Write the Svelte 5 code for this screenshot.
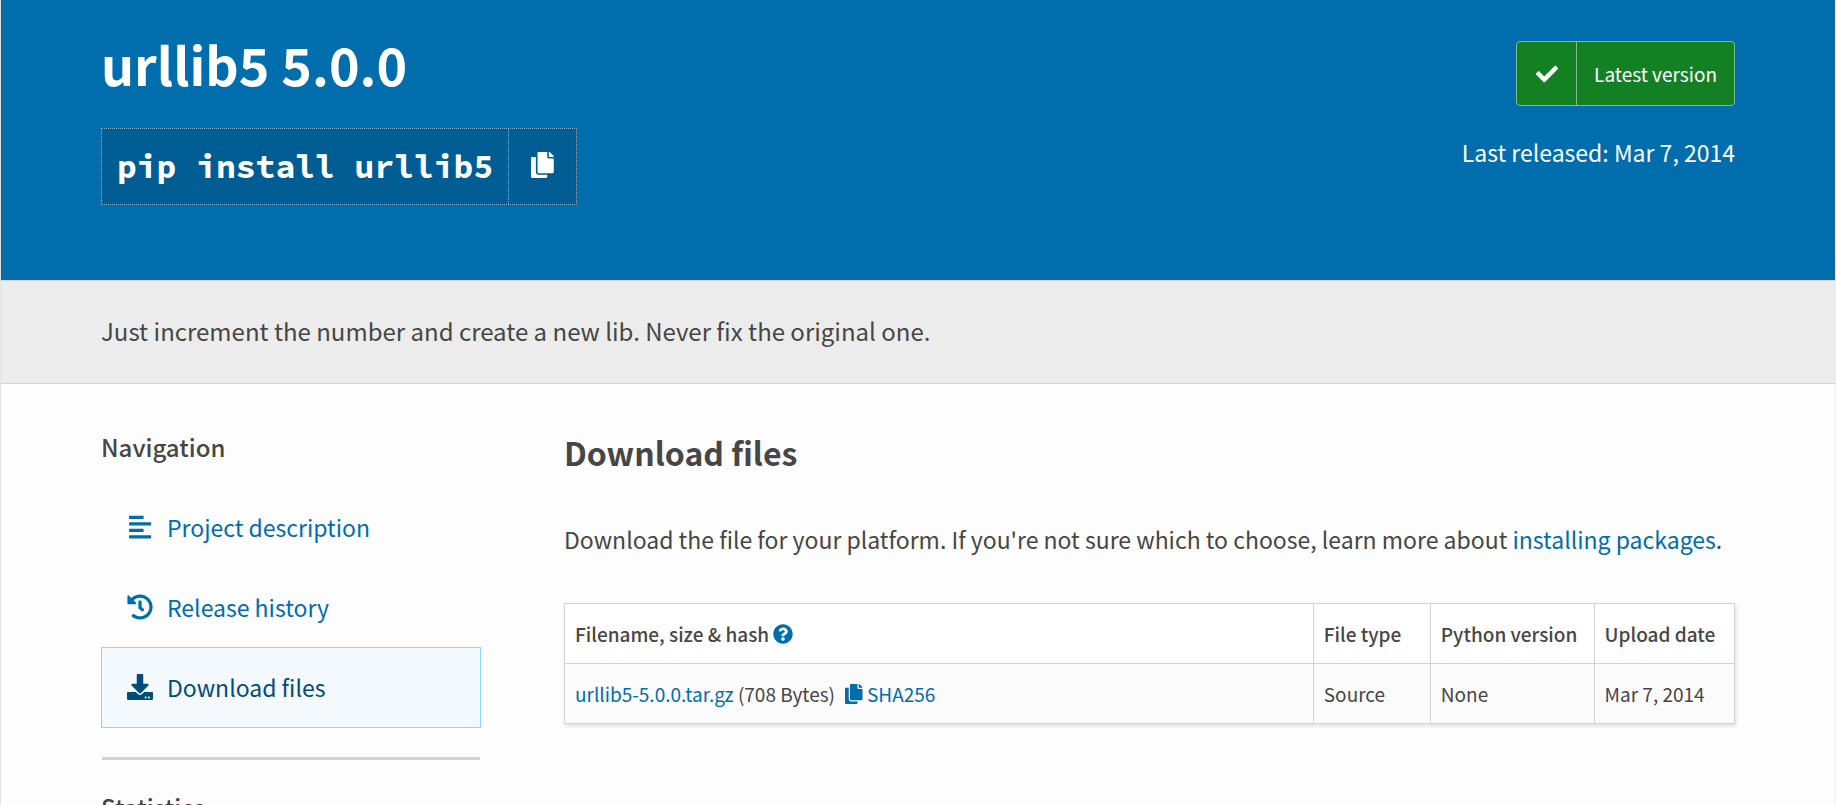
<script lang="ts">
    type Icon = { box: string; path: string };

    const project = 'urllib5';
    const version = '5.0.0';
    const installCommand = `pip install ${project}`;

    const icons: Record<string, Icon> = {
        check: {
            box: '0 0 512 512',
            path: 'M173.898 439.404l-166.4-166.4c-9.997-9.997-9.997-26.206 0-36.204l36.203-36.204c9.997-9.998 26.207-9.998 36.204 0L192 312.69 432.095 72.596c9.997-9.997 26.207-9.997 36.204 0l36.203 36.204c9.997 9.997 9.997 26.206 0 36.204l-294.4 294.401c-9.998 9.997-26.207 9.997-36.204-.001z'
        },
        copy: {
            box: '0 0 448 512',
            path: 'M320 448v40c0 13.255-10.745 24-24 24H24c-13.255 0-24-10.745-24-24V120c0-13.255 10.745-24 24-24h72v296c0 30.879 25.121 56 56 56h168zm0-344V0H152c-13.255 0-24 10.745-24 24v368c0 13.255 10.745 24 24 24h272c13.255 0 24-10.745 24-24V128H344c-13.2 0-24-10.8-24-24zm120.971-31.029L375.029 7.029A24 24 0 0 0 358.059 0H352v96h96v-6.059a24 24 0 0 0-7.029-16.97z'
        },
        description: {
            box: '0 0 448 512',
            path: 'M12.83 352h262.34A12.82 12.82 0 0 0 288 339.17v-38.34A12.82 12.82 0 0 0 275.17 288H12.83A12.82 12.82 0 0 0 0 300.83v38.34A12.82 12.82 0 0 0 12.83 352zm0-256h262.34A12.82 12.82 0 0 0 288 83.17V44.83A12.82 12.82 0 0 0 275.17 32H12.83A12.82 12.82 0 0 0 0 44.83v38.34A12.82 12.82 0 0 0 12.83 96zM432 160H16a16 16 0 0 0-16 16v32a16 16 0 0 0 16 16h416a16 16 0 0 0 16-16v-32a16 16 0 0 0-16-16zm0 256H16a16 16 0 0 0-16 16v32a16 16 0 0 0 16 16h416a16 16 0 0 0 16-16v-32a16 16 0 0 0-16-16z'
        },
        history: {
            box: '0 0 512 512',
            path: 'M504 255.531c.253 136.64-111.18 248.372-247.82 248.468-59.015.042-113.223-20.53-155.822-54.911-11.077-8.94-11.905-25.541-1.839-35.607l11.267-11.267c8.609-8.609 22.353-9.551 31.891-1.984C173.062 425.135 212.781 440 256 440c101.705 0 184-82.311 184-184 0-101.705-82.311-184-184-184-48.814 0-93.149 18.969-126.068 49.932l50.754 50.754c10.08 10.08 2.941 27.314-11.313 27.314H24c-8.837 0-16-7.163-16-16V38.627c0-14.254 17.234-21.393 27.314-11.314l49.372 49.372C129.209 34.136 189.552 8 256 8c136.81 0 247.747 110.78 248 247.531zm-180.912 78.784l9.823-12.63c8.138-10.463 6.253-25.542-4.21-33.679L288 256.349V152c0-13.255-10.745-24-24-24h-16c-13.255 0-24 10.745-24 24v135.651l65.409 50.874c10.463 8.137 25.541 6.253 33.679-4.21z'
        },
        download: {
            box: '0 0 512 512',
            path: 'M216 0h80c13.3 0 24 10.7 24 24v168h87.7c17.8 0 26.7 21.5 14.1 34.1L269.7 378.3c-7.5 7.5-19.8 7.5-27.3 0L90.1 226.1c-12.6-12.6-3.7-34.1 14.1-34.1H192V24c0-13.3 10.7-24 24-24zm296 376v112c0 13.3-10.7 24-24 24H24c-13.3 0-24-10.7-24-24V376c0-13.3 10.7-24 24-24h146.7l49 49c20.1 20.1 52.5 20.1 72.6 0l49-49H488c13.3 0 24 10.7 24 24zm-124 88c0-11-9-20-20-20s-20 9-20 20 9 20 20 20 20-9 20-20zm64 0c0-11-9-20-20-20s-20 9-20 20 9 20 20 20 20-9 20-20z'
        },
        question: {
            box: '0 0 512 512',
            path: 'M504 256c0 136.997-111.043 248-248 248S8 392.997 8 256C8 119.083 119.043 8 256 8s248 111.083 248 248zM262.655 90c-54.497 0-89.255 22.957-116.549 63.758-3.536 5.286-2.353 12.415 2.715 16.258l34.699 26.31c5.205 3.947 12.621 3.008 16.665-2.122 17.864-22.658 30.113-35.797 57.303-35.797 20.429 0 45.698 13.148 45.698 32.958 0 14.976-12.363 22.667-32.534 33.976C247.128 238.528 216 254.941 216 296v4c0 6.627 5.373 12 12 12h56c6.627 0 12-5.373 12-12v-1.333c0-28.462 83.186-29.647 83.186-106.667 0-58.002-60.165-102-116.531-102zM256 338c-25.365 0-46 20.635-46 46 0 25.364 20.635 46 46 46s46-20.636 46-46c0-25.364-20.636-46-46-46z'
        }
    };

    const tabs = [
        { id: 'description', label: 'Project description', icon: 'description' },
        { id: 'history', label: 'Release history', icon: 'history' },
        { id: 'files', label: 'Download files', icon: 'download' }
    ];

    const files = [
        { name: 'urllib5-5.0.0.tar.gz', size: '708 Bytes', type: 'Source', python: 'None', date: 'Mar 7, 2014' }
    ];

    let activeTab = $state('files');

    function copyCommand() {
        navigator.clipboard?.writeText(installCommand);
    }
</script>

{#snippet icon(name: string)}
    <svg class="icon icon-{name}" viewBox={icons[name].box} aria-hidden="true">
        <path d={icons[name].path} />
    </svg>
{/snippet}

<div class="page">
    <header class="banner">
        <div class="container banner-inner">
            <div>
                <h1>{project} {version}</h1>
                <div class="pip">
                    <code>{installCommand}</code>
                    <button class="pip-copy" aria-label="Copy PIP instructions" onclick={copyCommand}>
                        {@render icon('copy')}
                    </button>
                </div>
            </div>
            <div class="release">
                <a class="badge" href="#latest">
                    <span class="badge-icon">{@render icon('check')}</span>
                    <span class="badge-text">Latest version</span>
                </a>
                <p class="release-date">Last released: <time datetime="2014-03-07">Mar 7, 2014</time></p>
            </div>
        </div>
    </header>

    <div class="summary">
        <p class="container">Just increment the number and create a new lib. Never fix the original one.</p>
    </div>

    <main class="container columns">
        <aside>
            <h3>Navigation</h3>
            <nav aria-label="Navigation for {project}">
                {#each tabs as tab (tab.id)}
                    <a
                        class="tab"
                        class:active={activeTab === tab.id}
                        href="#{tab.id}"
                        onclick={() => (activeTab = tab.id)}
                    >
                        <span class="tab-icon">{@render icon(tab.icon)}</span>
                        {tab.label}
                    </a>
                {/each}
            </nav>
            <hr />
            <h3>Statistics</h3>
        </aside>

        <section>
            <h2>Download files</h2>
            <p class="intro">
                Download the file for your platform. If you're not sure which to choose, learn more about
                <a href="#packages">installing packages</a>.
            </p>
            <table>
                <thead>
                    <tr>
                        <th class="col-file" scope="col">
                            Filename, size &amp; hash
                            <a class="help" href="#hash" aria-label="Hash help">{@render icon('question')}</a>
                        </th>
                        <th class="col-type" scope="col">File type</th>
                        <th class="col-python" scope="col">Python version</th>
                        <th scope="col">Upload date</th>
                    </tr>
                </thead>
                <tbody>
                    {#each files as file (file.name)}
                        <tr>
                            <td>
                                <a href="#{file.name}">{file.name}</a> ({file.size})
                                <a class="hash" href="#sha256">{@render icon('copy')} SHA256</a>
                            </td>
                            <td>{file.type}</td>
                            <td>{file.python}</td>
                            <td>{file.date}</td>
                        </tr>
                    {/each}
                </tbody>
            </table>
        </section>
    </main>
</div>

<style>
    :global(body) {
        background: #fdfdfd;
    }

    .page {
        border-left: 1px solid #e3e3e3;
        border-right: 1px solid #ececec;
        color: #464646;
        font-family: 'Source Sans Pro', 'Noto Sans CJK SC', sans-serif;
        font-size: 23px;
        line-height: 34px;
    }

    h1, h2, h3, p {
        margin: 0;
    }

    a {
        color: #006dad;
        text-decoration: none;
    }

    .icon {
        display: inline-block;
        height: 26px;
        fill: currentColor;
    }

    .container {
        padding-left: 100px;
        padding-right: 100px;
    }

    /* Banner */
    .banner {
        background: #006dad;
        color: #fff;
    }

    .banner-inner {
        display: flex;
        justify-content: space-between;
        align-items: flex-start;
        padding-top: 34px;
        padding-bottom: 75px;
    }

    h1 {
        font-size: 52px;
        font-weight: 700;
        line-height: 60px;
    }

    .pip {
        display: flex;
        width: fit-content;
        margin-top: 34px;
        border: 1px dotted #8ab4d0;
        background: #005d93;
    }

    code {
        padding: 14px 15px 13px;
        font-family: 'Source Code Pro', 'Noto Sans Mono CJK SC', 'Liberation Mono', monospace;
        font-size: 33px;
        font-weight: 700;
        line-height: 48px;
    }

    .pip-copy {
        display: flex;
        justify-content: center;
        align-items: center;
        width: 68px;
        padding: 0 0 3px;
        border: 0;
        border-left: 1px dotted #8ab4d0;
        background: none;
        color: inherit;
        cursor: pointer;
    }

    .release {
        margin-top: 7px;
        text-align: right;
    }

    .badge {
        display: inline-flex;
        border: 1px solid #82bb88;
        border-radius: 4px;
        background: #148024;
        color: #fff;
        font-size: 19px;
        line-height: 63px;
    }

    .badge-icon {
        display: flex;
        justify-content: center;
        align-items: center;
        width: 59px;
        border-right: 1px solid #82bb88;
    }

    .icon-check {
        height: 22px;
    }

    .badge-text {
        padding: 0 17px;
    }

    .release-date {
        margin-top: 29px;
    }

    /* Summary */
    .summary {
        padding: 33px 0 35px;
        border-top: 1px solid #d3d3d3;
        border-bottom: 1px solid #d3d3d3;
        background: #ececec;
        font-size: 24px;
    }

    /* Columns */
    .columns {
        display: grid;
        grid-template-columns: 380px 1fr;
        gap: 83px;
        padding-top: 46px;
    }

    h3 {
        font-size: 24px;
        font-weight: 500;
    }

    nav {
        margin-top: 23px;
    }

    .tab {
        display: flex;
        align-items: center;
        gap: 14px;
        margin-bottom: -1px;
        padding: 22px 25px 23px;
        border: 1px solid transparent;
    }

    .tab.active {
        border-color: #8fd6ff;
        background: #f4f9fd;
        color: #004d7a;
    }

    .tab-icon {
        display: flex;
        justify-content: center;
        width: 26px;
    }

    hr {
        height: 3px;
        margin: 30px 1px;
        border: 0;
        background: #d3d3d3;
    }

    h2 {
        font-size: 32px;
        font-weight: 700;
        line-height: 44px;
    }

    .intro {
        margin-top: 48px;
    }

    /* Files table */
    table {
        width: 100%;
        margin-top: 47px;
        border-collapse: collapse;
        background: #fff;
        box-shadow: 1px 2px 4px rgba(0, 0, 0, 0.12);
        font-size: 19px;
        line-height: 27px;
    }

    th, td {
        padding: 16px 10px;
        border: 1px solid #d3d3d3;
        text-align: left;
        white-space: nowrap;
    }

    th {
        font-weight: 500;
    }

    td {
        background: #fbfbfb;
    }

    .col-file {
        width: 64%;
    }

    .col-type {
        width: 10%;
    }

    .col-python {
        width: 14%;
    }

    .help .icon,
    .hash .icon {
        height: 20px;
        vertical-align: -2px;
    }

    .hash {
        margin-left: 6px;
    }
</style>
